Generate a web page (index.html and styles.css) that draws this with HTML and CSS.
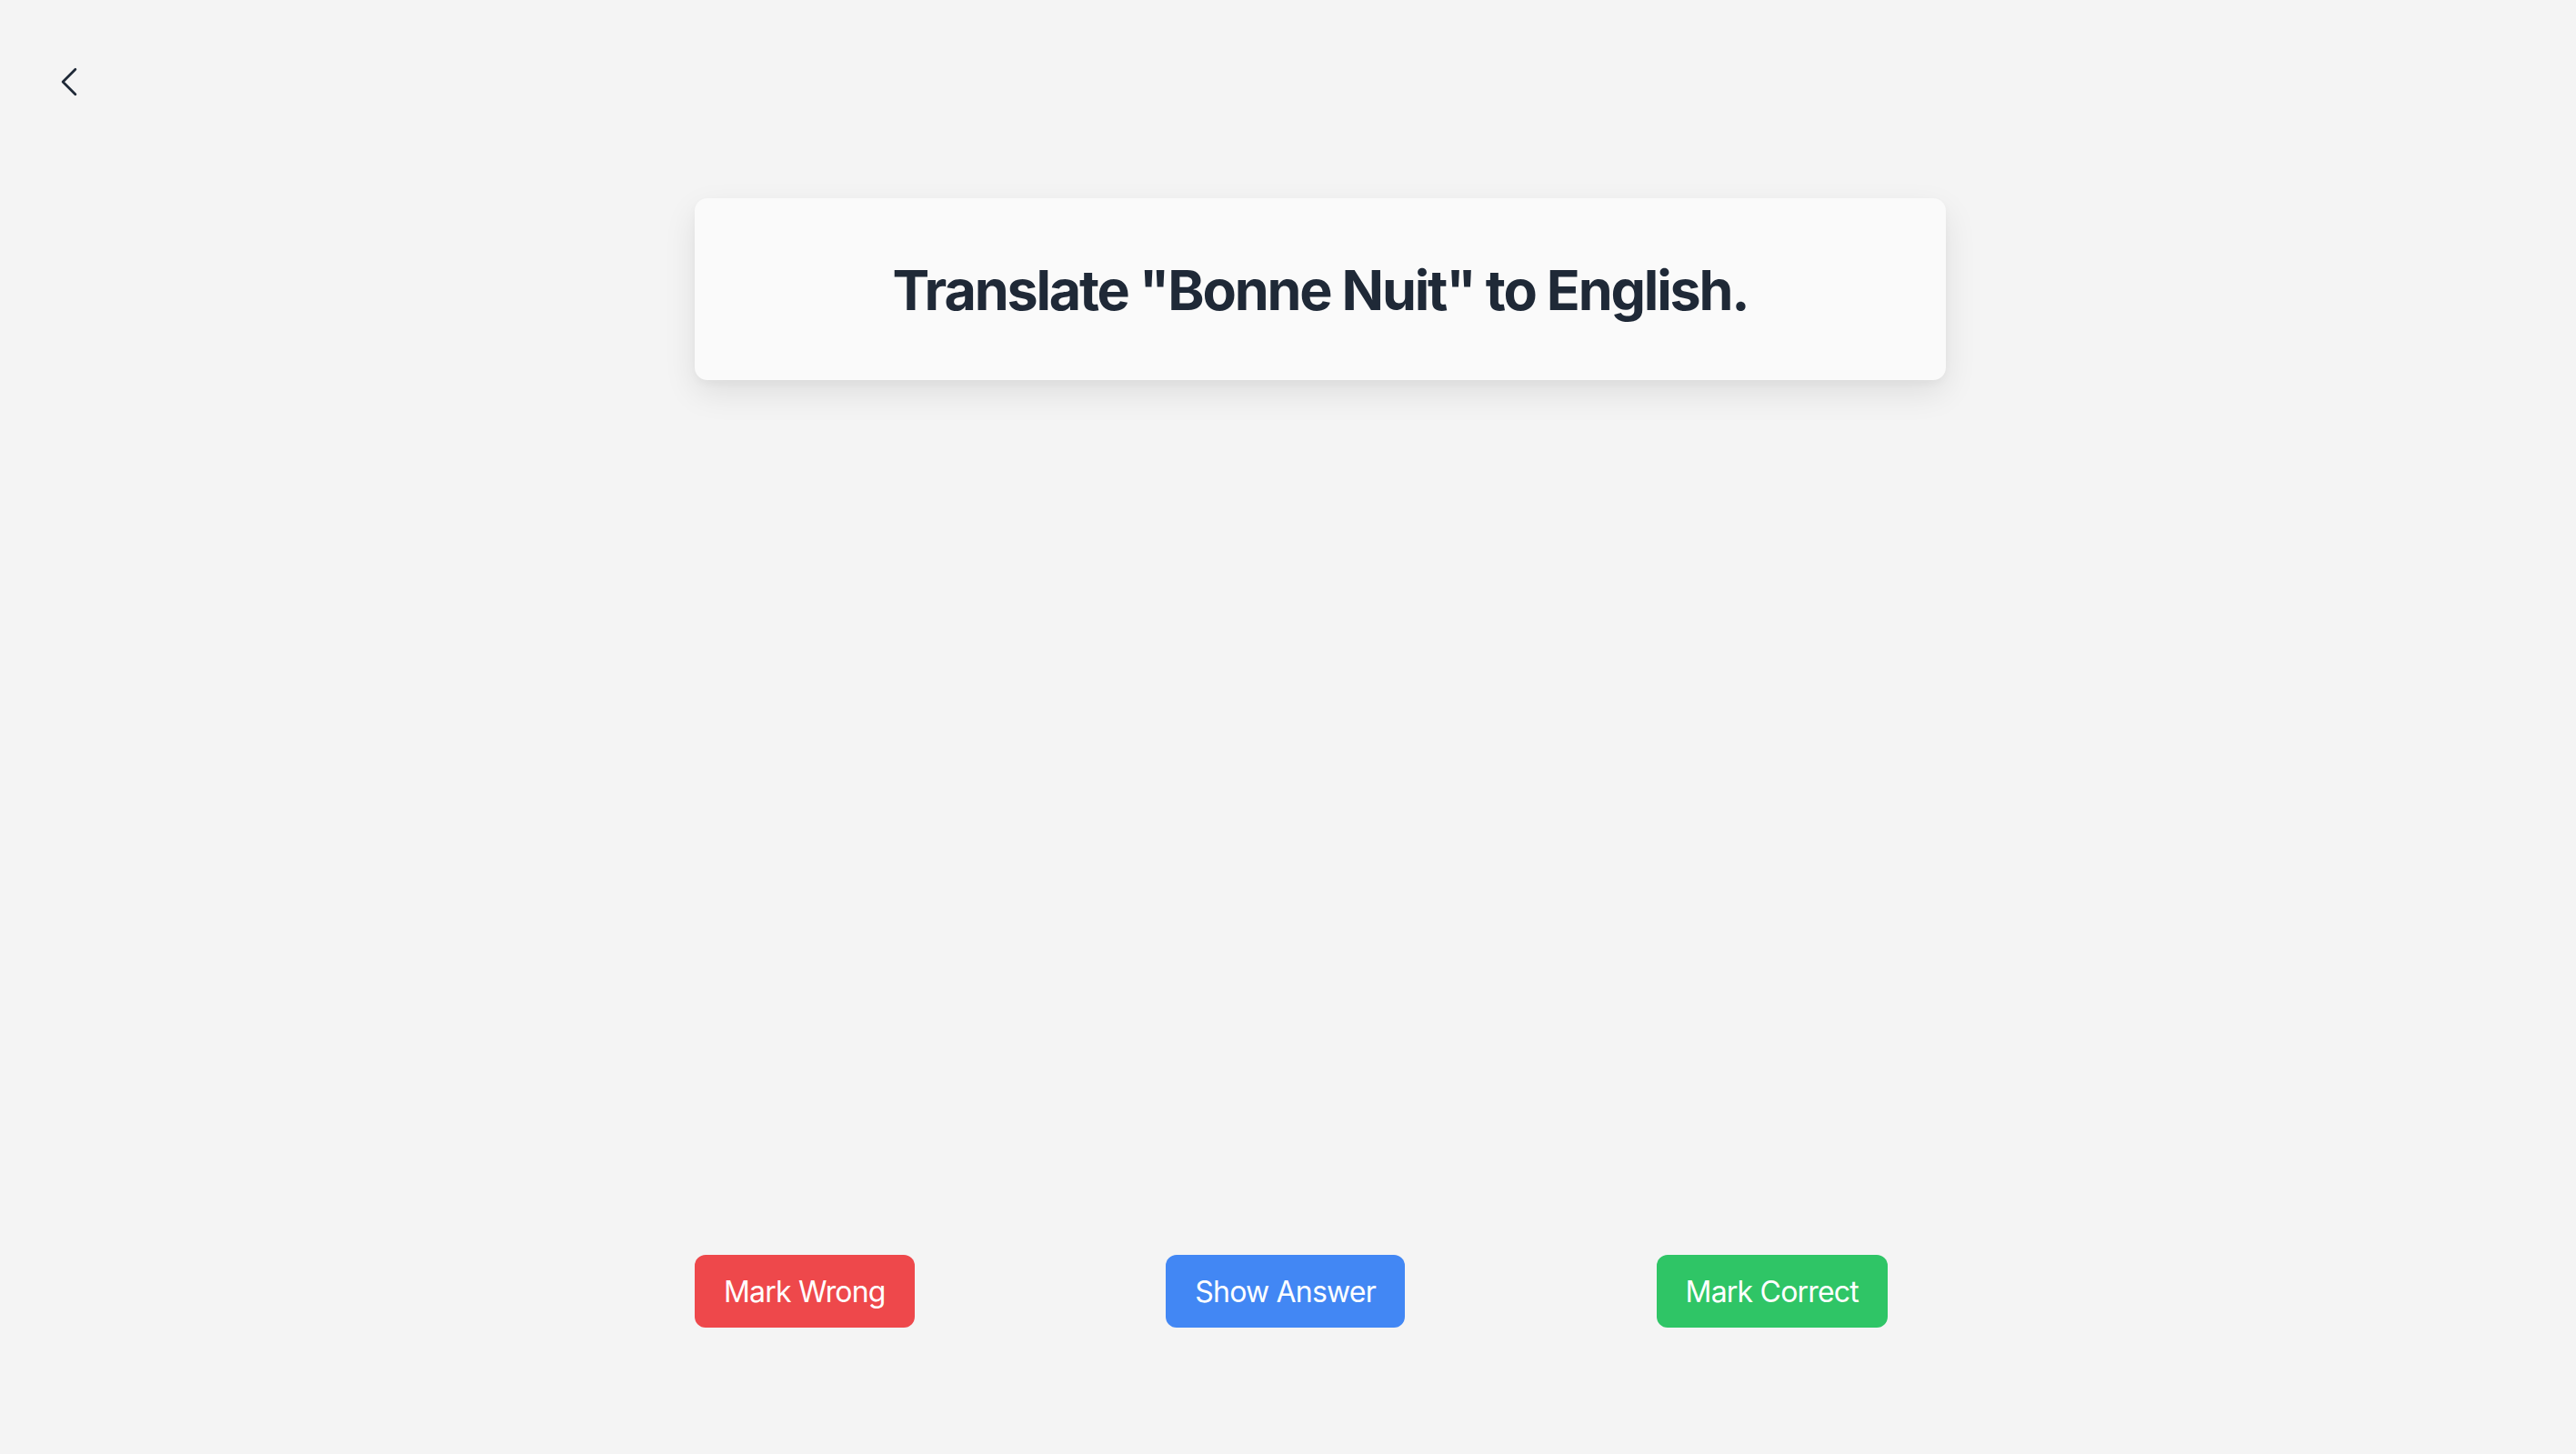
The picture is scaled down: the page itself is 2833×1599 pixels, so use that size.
FILE: index.html
```html
<!DOCTYPE html>
<html lang="en">
<head>
<meta charset="utf-8">
<title>Flashcard</title>
<link rel="stylesheet" href="styles.css">
</head>
<body>
  <header class="topbar">
    <button class="back" aria-label="Back">
      <svg viewBox="0 0 24 24" width="44" height="44" fill="none" stroke="currentColor" stroke-width="1.5" stroke-linecap="round" stroke-linejoin="round"><path d="M15.75 19.5 8.25 12l7.5-7.5"/></svg>
    </button>
  </header>
  <main class="quiz">
    <section class="card">
      <h1 class="question">Translate "Bonne Nuit" to English.</h1>
    </section>
    <div class="actions">
      <button class="btn btn-wrong">Mark Wrong</button>
      <button class="btn btn-show">Show Answer</button>
      <button class="btn btn-correct">Mark Correct</button>
    </div>
  </main>
</body>
</html>
```
FILE: styles.css
```css
html, body {
  margin: 0;
  padding: 0;
}
body {
  background: #f4f4f4;
  font-family: Inter, "Noto Sans", "Liberation Sans", sans-serif;
  color: #1f2937;
  min-height: 1599px;
}
.topbar {
  padding: 68px 0 0 54px;
  display: flex;
}
.back {
  width: 44px;
  height: 44px;
  padding: 0;
  border: 0;
  background: transparent;
  color: #1f2937;
  display: flex;
  cursor: pointer;
}
.quiz {
  width: 1376px;
  margin: 106px 0 0 764px;
}
.card {
  box-sizing: border-box;
  height: 200px;
  padding-top: 3px;
  background: #fafafa;
  border-radius: 14px;
  box-shadow: 0 14px 36px rgba(0, 0, 0, 0.09), 0 4px 10px rgba(0, 0, 0, 0.03);
  display: flex;
  align-items: center;
  justify-content: center;
}
.question {
  margin: 0;
  font-size: 61px;
  line-height: 1.2;
  font-weight: 700;
  color: #1f2937;
  letter-spacing: -2.2px;
}
.actions {
  width: 1312px;
  margin-top: 962px;
  display: flex;
  justify-content: space-between;
}
.btn {
  font-family: Inter, "Noto Sans", "Liberation Sans", sans-serif;
  font-size: 32px;
  line-height: 40px;
  font-weight: 400;
  letter-spacing: -0.8px;
  color: #ffffff;
  border: 0;
  border-radius: 12px;
  padding: 21px 32px 19px;
  cursor: pointer;
}
.btn-wrong { background: #ee484b; }
.btn-show { background: #4287f4; }
.btn-correct { background: #2fc566; }
```
